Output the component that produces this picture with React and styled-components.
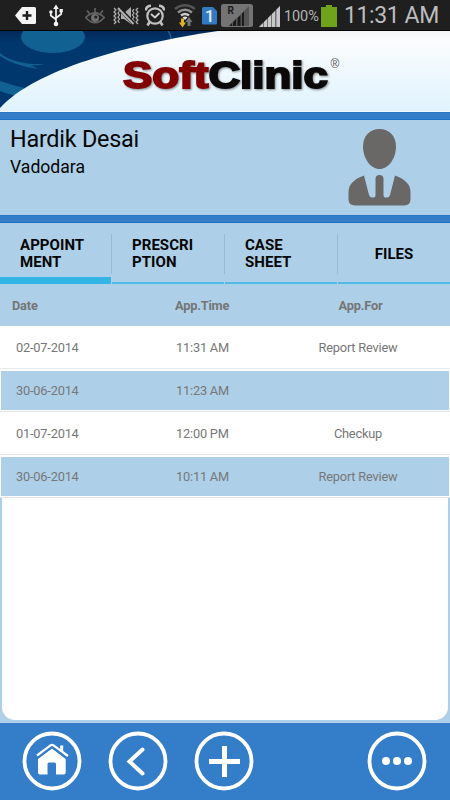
import styled, { createGlobalStyle } from 'styled-components';

const GlobalStyle = createGlobalStyle`
  * {
    box-sizing: border-box;
  }

  body {
    margin: 0;
    background: #add0e8;
    font-family: Roboto, 'Liberation Sans', sans-serif;
  }
`;

const Screen = styled.div`
  display: flex;
  flex-direction: column;
  width: 450px;
  height: 800px;
  overflow: hidden;
  background: #add0e8;
`;

const StatusBar = styled.div`
  display: flex;
  flex: none;
  height: 31px;
  background: #1f1f1f;
  border-bottom: 1px solid #050505;
`;

const StatusIcon = styled.svg`
  flex: none;
  width: ${({ $width }) => $width}px;
  height: 31px;
  margin-left: ${({ $gap }) => $gap}px;
`;

const BatteryText = styled.span`
  width: 35px;
  margin-left: 4px;
  font-size: 14.5px;
  line-height: 33px;
  letter-spacing: -0.1px;
  color: #b4b4b4;
  white-space: nowrap;
`;

const Clock = styled.span`
  margin-left: 7px;
  font-size: 23px;
  line-height: 31px;
  letter-spacing: -0.4px;
  color: #bdbdbd;
  white-space: nowrap;
`;

const Banner = styled.header`
  flex: none;
  height: 81px;
  border-bottom: 1px solid #eef7fb;
`;

const BannerArt = styled.svg`
  display: block;
`;

const LogoText = styled.text`
  font-family: 'Liberation Sans', Arial, sans-serif;
  font-size: 36px;
  font-weight: 700;
  stroke-width: 1.8px;
  stroke-linejoin: miter;
`;

const Stripe = styled.div`
  flex: none;
  height: 8px;
  background: #347dc8;
  border-top: 1px solid #2b76c4;
  border-bottom: 1px solid #1f72c3;
`;

const Profile = styled.section`
  display: flex;
  flex: none;
  justify-content: space-between;
  height: 95px;
  padding: 0 38px 0 10px;
`;

const PatientName = styled.h1`
  margin: 5px 0 0;
  font-size: 23.4px;
  font-weight: 400;
  line-height: 29px;
  letter-spacing: -0.25px;
  color: #060606;
`;

const PatientCity = styled.p`
  margin: 2px 0 0;
  font-size: 17.6px;
  line-height: 22px;
  color: #060606;
`;

const Avatar = styled.svg`
  width: 66px;
  height: 80px;
  margin-top: 8px;
`;

const Tabs = styled.nav`
  display: grid;
  flex: none;
  grid-template-columns: 111px 112px 112px 112px;
  column-gap: 1px;
  height: 61px;
  background: linear-gradient(#94bcd8, #94bcd8) 111px 11px / 1px 40px no-repeat,
    linear-gradient(#94bcd8, #94bcd8) 224px 11px / 1px 40px no-repeat,
    linear-gradient(#94bcd8, #94bcd8) 337px 11px / 1px 40px no-repeat;
`;

const Tab = styled.button`
  display: flex;
  align-items: center;
  justify-content: ${({ $centered }) => ($centered ? 'center' : 'flex-start')};
  height: 61px;
  padding: ${({ $active }) => ($active ? 8 : 3)}px 0 0
    ${({ $centered }) => ($centered ? 0 : 20)}px;
  border: 0;
  border-bottom: ${({ $active }) => ($active ? 7 : 2)}px solid
    ${({ $active }) => ($active ? '#33b5e5' : '#4fbbe6')};
  background: none;
  font: 700 15px/17px Roboto, sans-serif;
  letter-spacing: 0.05px;
  color: #060606;
  text-align: left;
  white-space: pre-line;
`;

const TableHead = styled.div`
  display: flex;
  flex: none;
  align-items: center;
  height: 42px;
  padding-left: 12px;
  font-size: 12.8px;
  font-weight: 700;
  letter-spacing: -0.2px;
  color: #757575;
`;

const Row = styled.div`
  display: flex;
  flex: none;
  align-items: center;
  height: 43px;
  padding-left: 16px;
  border-bottom: 1px solid #e6e8ea;
  background: #fff;
  font-size: 12.8px;
  letter-spacing: -0.2px;
  color: #777;
`;

const TintedRow = styled(Row)`
  height: 42px;
  padding-left: 15px;
  border: 1px solid #fdfdfd;
  border-top-width: 2px;
  background: #add0e8;
`;

const TintedWrap = styled.div`
  flex: none;
  height: 43px;
  border-bottom: 1px solid #e2e5e8;
`;

const Cell = styled.span`
  width: ${({ $width }) => $width}px;
  text-align: ${({ $align }) => $align || 'left'};
`;

const EmptyPanel = styled.div`
  flex: none;
  height: 222px;
  margin: 0 2px 3px 2px;
  background: #fff;
  border-radius: 0 0 13px 13px;
`;

const BottomBar = styled.footer`
  display: flex;
  flex: 1;
  align-items: flex-start;
  gap: 26px;
  padding: 8px 22px 0;
  background: #347dc8;
`;

const RoundButton = styled.button`
  width: 60px;
  height: 60px;
  padding: 0;
  border: 0;
  background: none;
  margin-left: ${({ $end }) => ($end ? 'auto' : 0)};
  margin-right: ${({ $end }) => ($end ? '1px' : 0)};

  svg {
    display: block;
  }
`;

const appointments = [
  { date: '02-07-2014', time: '11:31 AM', reason: 'Report Review' },
  { date: '30-06-2014', time: '11:23 AM', reason: '' },
  { date: '01-07-2014', time: '12:00 PM', reason: 'Checkup' },
  { date: '30-06-2014', time: '10:11 AM', reason: 'Report Review' },
];

const tabs = ['APPOINT\nMENT', 'PRESCRI\nPTION', 'CASE\nSHEET', 'FILES'];

function StatusIcons() {
  return (
    <>
      <StatusIcon $width={21} $gap={15} viewBox="0 0 21 31">
        <path d="M7 7h12.500q1.500 0 1.500 1.500v14q0 1.500-1.500 1.500H7L0 15.500z" fill="#f4f4f4" />
        <path d="M12 11v9M7.500 15.500h9" stroke="#1f1f1f" strokeWidth="2.400" />
      </StatusIcon>
      <StatusIcon $width={14} $gap={13} viewBox="0 0 14 31">
        <g fill="none" stroke="#f4f4f4" strokeWidth="1.700">
          <path d="M7 8v16M1.800 12v3.500L7 19.500M12.200 11v3L7 18" />
        </g>
        <g fill="#f4f4f4">
          <path d="M7 4.500L9.800 9H4.200z" />
          <circle cx="7" cy="24" r="2.300" />
          <circle cx="1.900" cy="12" r="1.700" />
          <path d="M10.500 9h3.300v3.300h-3.300z" />
        </g>
      </StatusIcon>
      <StatusIcon $width={20} $gap={22} viewBox="0 0 20 31">
        <g fill="none" stroke="#626262" strokeWidth="1.700">
          <path d="M.7 17.500Q10 8.500 19.300 17.500Q10 28 .7 17.500z" />
          <path d="M10 12V8M4.500 13.500L2 10.500M15.500 13.500l2.500-3" />
        </g>
        <circle cx="10" cy="18" r="4" fill="#707070" />
        <circle cx="10.800" cy="17" r="1.600" fill="#222" />
      </StatusIcon>
      <StatusIcon $width={26} $gap={8} viewBox="0 0 26 31">
        <path
          d="M1 8l2 2-2 2 2 2-2 2 2 2-2 2 2 2-2 2M5 9l1.500 2L5 13l1.500 2L5 17l1.500 2L5 21l1.500 2M25 8l-2 2 2 2-2 2 2 2-2 2 2 2-2 2 2 2M21 9l-1.500 2 1.500 2-1.500 2 1.500 2-1.500 2 1.500 2-1.500 2"
          fill="none"
          stroke="#b5b5b5"
          strokeWidth="1.200"
        />
        <path d="M8 13h3l7-6v17l-7-5H8z" fill="#adadad" />
        <path d="M5.500 7.500L21 24" stroke="#1f1f1f" strokeWidth="4" />
        <path d="M5 8L20.500 24" stroke="#b5b5b5" strokeWidth="1.800" />
      </StatusIcon>
      <StatusIcon $width={20} $gap={6} viewBox="0 0 20 31">
        <circle cx="10" cy="16" r="7.700" fill="none" stroke="#c1c1c1" strokeWidth="2.200" />
        <path
          d="M.8 10.500Q1.200 6 6 5.800M19.200 10.500Q18.800 6 14 5.800M4.500 22l-2 3.500M15.500 22l2 3.500"
          fill="none"
          stroke="#c1c1c1"
          strokeWidth="2.600"
        />
        <path d="M6 14l4 3.500 4.500-4.500" fill="none" stroke="#d0d0d0" strokeWidth="1.800" />
      </StatusIcon>
      <StatusIcon $width={22} $gap={9} viewBox="0 0 22 31">
        <g fill="none" strokeWidth="2.600">
          <path d="M1 9Q11 1.500 21 9" stroke="#545454" />
          <path d="M4 12.500Q11 7 18 12.500" stroke="#929292" />
          <path d="M7 15.500Q11 12.500 15 15.500" stroke="#cbcbcb" />
        </g>
        <path d="M8.500 17.500Q11 15.500 13.500 17.500L11 20z" fill="#ddd" />
        <path d="M7 18.500h3v4h2l-3.500 5-3.500-5h2z" fill="#e0b321" />
        <path d="M13.500 26v-4H11.500l3.500-5 3.500 5h-2v4z" fill="#777" />
      </StatusIcon>
      <StatusIcon $width={15} $gap={6} viewBox="0 0 15 31">
        <path d="M1.500 7H11l4 4v12q0 1.500-1.500 1.500h-12Q0 24.500 0 23V8.500Q0 7 1.500 7z" fill="#327bc2" />
        <text x="7.500" y="22" textAnchor="middle" fontSize="17" fontWeight="500" fill="#e6edf5">1</text>
      </StatusIcon>
      <StatusIcon $width={32} $gap={4} viewBox="0 0 32 31">
        <rect y="4" width="32" height="23" rx="2.500" fill="#747474" />
        <path d="M8 26L28 6v20z" fill="#555" />
        <path d="M8 26l3-3v3zM12 26v-4l3-3v7zM16.500 26v-8l3-3v11zM21 26V13.500l2-2V26z" fill="#1b1b1b" />
        <text x="6.500" y="14" fontSize="10" fontWeight="700" fill="#1b1b1b">R</text>
      </StatusIcon>
      <StatusIcon $width={21} $gap={6} viewBox="0 0 21 31">
        <path d="M0 27L21 6v21z" fill="#737373" />
        <path d="M0 27l4-4v4zM5 27v-5l3-3v8zM9 27v-9l3-3v12zM13 27V14l3-3v16zM17.500 27V9.500L21 6v21z" fill="#c8c8c8" />
      </StatusIcon>
    </>
  );
}

function AppBanner() {
  return (
    <BannerArt width="450" height="80" viewBox="0 0 450 80">
      <defs>
        <linearGradient id="sky" x1="0" y1="0" x2="0" y2="1">
          <stop offset="0" stopColor="#f2f3f5" />
          <stop offset="0.12" stopColor="#fafcfe" />
          <stop offset="1" stopColor="#e0f3fd" />
        </linearGradient>
        <linearGradient id="navy" x1="0" y1="0" x2="0" y2="1">
          <stop offset="0" stopColor="#04295a" />
          <stop offset="0.15" stopColor="#00376c" />
          <stop offset="1" stopColor="#00376d" />
        </linearGradient>
      </defs>
      <rect width="450" height="80" fill="url(#navy)" />
      <ellipse cx="53" cy="6" rx="32" ry="16" fill="#116192" />
      <path d="M0 22Q14 34 45 33Q35 35 31 34L38 38Q15 35 0 25z" fill="#116192" />
      <path d="M0 50Q14 55 30 58L23 66Q10 64 0 60z" fill="#116192" />
      <path d="M168 0Q172 5 171 12" fill="none" stroke="#176594" strokeWidth="1.500" />
      <path d="M0 77C34 39 128 13 218 0H450V80H0z" fill="url(#sky)" />
      <g style={{ filter: 'drop-shadow(1px 1.500px 1px rgba(0, 0, 0, .45))' }}>
        <LogoText x="123" y="57" textLength="205" lengthAdjust="spacingAndGlyphs">
          <tspan fill="#820202" stroke="#820202">Soft</tspan>
          <tspan fill="#0b0909" stroke="#0b0909">Clinic</tspan>
        </LogoText>
      </g>
      <text x="330.500" y="37" fontFamily="Liberation Sans, sans-serif" fontSize="12" fill="#555">®</text>
    </BannerArt>
  );
}

function Glyph({ children }) {
  return (
    <svg width="60" height="60" viewBox="0 0 60 60" fill="none" stroke="#fff">
      <circle cx="30" cy="30" r="27.500" strokeWidth="3.800" />
      {children}
    </svg>
  );
}

function AppointmentRow({ item, tinted }) {
  const cells = (
    <>
      <Cell $width={160}>{item.date}</Cell>
      <Cell $width={101}>{item.time}</Cell>
      <Cell $width={162} $align="center">{item.reason}</Cell>
    </>
  );

  if (!tinted) return <Row>{cells}</Row>;

  return (
    <TintedWrap>
      <TintedRow>{cells}</TintedRow>
    </TintedWrap>
  );
}

export default function App() {
  return (
    <Screen>
      <GlobalStyle />
      <StatusBar>
        <StatusIcons />
        <BatteryText>100%</BatteryText>
        <StatusIcon $width={16} $gap={2} viewBox="0 0 16 31">
          <path d="M0 7h5V5h6v2h5v20H0z" fill="#70a31c" />
        </StatusIcon>
        <Clock>11:31 AM</Clock>
      </StatusBar>
      <Banner>
        <AppBanner />
      </Banner>
      <Stripe />
      <Profile>
        <div>
          <PatientName>Hardik Desai</PatientName>
          <PatientCity>Vadodara</PatientCity>
        </div>
        <Avatar viewBox="0 0 66 80" fill="#696866">
          <path d="M33.500 1C43 1 50 8 50 18.500C50 31 42 41 33.500 41S17 31 17 18.500C17 8 24 1 33.500 1z" />
          <path d="M18 47.500L23 67q.7 2.500 3 2.500h1.500q2 0 2-2V51q0-4 4-4t4 4v16.500q0 2 2 2H41q2.300 0 3-2.500l5-19.500Q64.500 53 64.500 64v7q0 6.500-6.500 6.500H9Q2.500 77.500 2.500 71v-7Q2.500 53 18 47.500z" />
        </Avatar>
      </Profile>
      <Stripe />
      <Tabs>
        {tabs.map((label, i) => (
          <Tab key={label} $active={i === 0} $centered={i === 3}>{label}</Tab>
        ))}
      </Tabs>
      <TableHead>
        <Cell $width={163}>Date</Cell>
        <Cell $width={105}>App.Time</Cell>
        <Cell $width={161} $align="center">App.For</Cell>
      </TableHead>
      {appointments.map((item, i) => (
        <AppointmentRow key={i} item={item} tinted={i % 2 === 1} />
      ))}
      <EmptyPanel />
      <BottomBar>
        <RoundButton aria-label="Home">
          <Glyph>
            <path d="M30 17.500l13.700 10.500v13.500q0 2-2 2H34V33q0-1.500-1.500-1.500h-5.500q-1.500 0-1.500 1.500v10.500h-7.500q-2 0-2-2V28z" fill="#fff" stroke="none" />
            <path d="M15 24.500L28.500 14.300q1.500-1 3 0L46 25" strokeWidth="2.200" />
            <path d="M38.200 14.500h3v6l-3-2z" fill="#fff" stroke="none" />
            <path d="M15.500 27L30 16.500l14.500 10.500" stroke="#347dc8" strokeWidth="1.300" />
          </Glyph>
        </RoundButton>
        <RoundButton aria-label="Back">
          <Glyph>
            <path d="M34.500 18.500L21.500 30.500l13 12" strokeWidth="4" strokeLinecap="round" />
          </Glyph>
        </RoundButton>
        <RoundButton aria-label="Add">
          <Glyph>
            <path d="M30.500 15v31M15 30.500h31" strokeWidth="5" />
          </Glyph>
        </RoundButton>
        <RoundButton $end aria-label="More">
          <Glyph>
            <g fill="#fff" stroke="none">
              <circle cx="19" cy="30" r="4" />
              <circle cx="30" cy="30" r="4" />
              <circle cx="41" cy="30" r="4" />
            </g>
          </Glyph>
        </RoundButton>
      </BottomBar>
    </Screen>
  );
}
